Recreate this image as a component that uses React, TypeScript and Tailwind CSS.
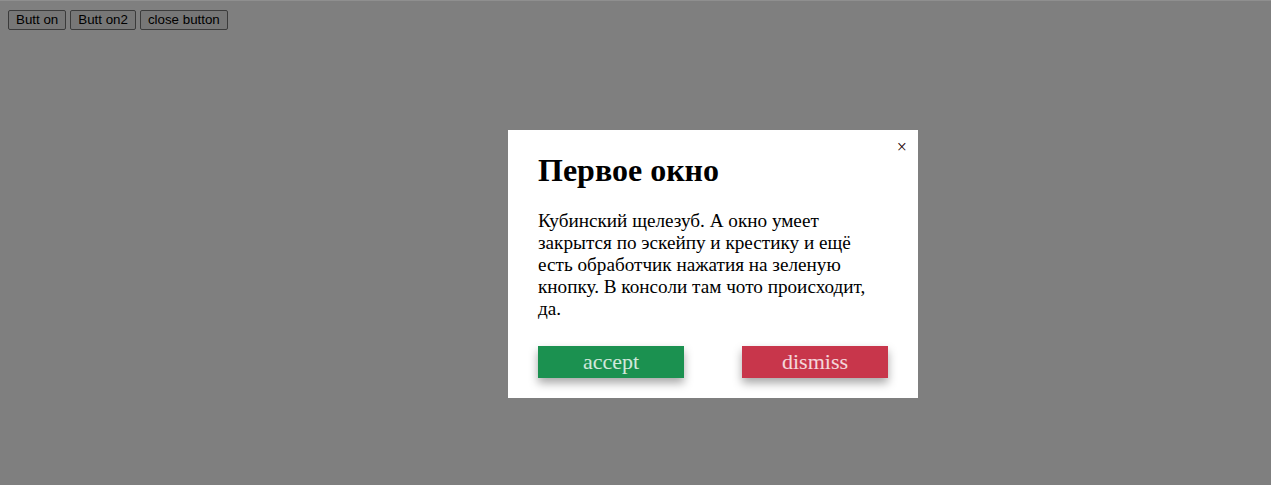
import React from 'react';

const serif = { fontFamily: '"Liberation Serif", "Times New Roman", serif' };

const App = () => {
  return (
    <div className="relative w-[1271px] h-[485px] bg-white overflow-hidden font-['Liberation_Sans',Arial,sans-serif]">
      {/* page buttons, under the overlay */}
      <div className="flex gap-[4px] pl-[8px] pt-[10px]">
        <button className="h-[20px] px-[7px] bg-[#efefef] border border-[#767676] rounded-[2px] text-[13.33px] leading-none text-black">
          Butt on
        </button>
        <button className="h-[20px] px-[7px] bg-[#efefef] border border-[#767676] rounded-[2px] text-[13.33px] leading-none text-black">
          Butt on2
        </button>
        <button className="h-[20px] px-[7px] bg-[#efefef] border border-[#767676] rounded-[2px] text-[13.33px] leading-none text-black">
          close button
        </button>
      </div>

      {/* overlay */}
      <div className="absolute inset-0 bg-black/50 border-t border-[#8f8f8f]" />

      {/* modal */}
      <div
        className="absolute left-[508px] top-[130px] w-[410px] bg-white px-[30px] pt-[20px] pb-[20px]"
        style={serif}
      >
        <button className="absolute top-[8px] right-[11px] text-[18px] leading-none text-[#220000]">
          ×
        </button>
        <h1 className="text-[32px] font-bold leading-[37px] text-black mt-[2px]">Первое окно</h1>
        <p className="mt-[21px] text-[19.2px] text-black" style={{ lineHeight: 'normal' }}>
          Кубинский щелезуб. А окно умеет закрытся по эскейпу и крестику и ещё есть обработчик нажатия на
          зеленую кнопку. В консоли там чото происходит, да.
        </p>
        <div className="mt-[26px] flex justify-between">
          <button className="w-[146px] h-[32px] bg-[#1b9150] text-white/80 text-[22px] leading-none shadow-[0_5px_10px_rgba(0,0,0,0.35)]">
            accept
          </button>
          <button className="w-[146px] h-[32px] bg-[#c8364b] text-white/80 text-[22px] leading-none shadow-[0_5px_10px_rgba(0,0,0,0.35)]">
            dismiss
          </button>
        </div>
      </div>
    </div>
  );
};

export default App;
